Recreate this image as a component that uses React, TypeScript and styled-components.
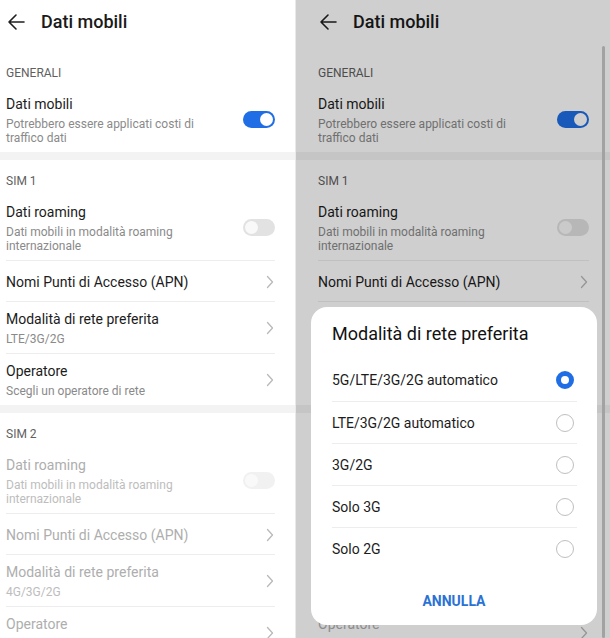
import React from "react";
import styled, { createGlobalStyle } from "styled-components";

type Item = {
  title: string;
  sub?: string;
  kind: "toggle" | "link";
  on?: boolean;
};

type Section = {
  label: string;
  disabled?: boolean;
  items: Item[];
};

const sections: Section[] = [
  {
    label: "GENERALI",
    items: [
      {
        title: "Dati mobili",
        sub: "Potrebbero essere applicati costi di traffico dati",
        kind: "toggle",
        on: true,
      },
    ],
  },
  {
    label: "SIM 1",
    items: [
      {
        title: "Dati roaming",
        sub: "Dati mobili in modalità roaming internazionale",
        kind: "toggle",
      },
      { title: "Nomi Punti di Accesso (APN)", kind: "link" },
      { title: "Modalità di rete preferita", sub: "LTE/3G/2G", kind: "link" },
      { title: "Operatore", sub: "Scegli un operatore di rete", kind: "link" },
    ],
  },
  {
    label: "SIM 2",
    disabled: true,
    items: [
      {
        title: "Dati roaming",
        sub: "Dati mobili in modalità roaming internazionale",
        kind: "toggle",
      },
      { title: "Nomi Punti di Accesso (APN)", kind: "link" },
      { title: "Modalità di rete preferita", sub: "4G/3G/2G", kind: "link" },
      { title: "Operatore", sub: "Scegli un operatore di rete", kind: "link" },
    ],
  },
];

const networkModes = [
  "5G/LTE/3G/2G automatico",
  "LTE/3G/2G automatico",
  "3G/2G",
  "Solo 3G",
  "Solo 2G",
];

const BackArrow = () => (
  <svg width="18" height="18" viewBox="0 0 18 18" fill="none">
    <path
      d="M17 9H2M9 2L2 9l7 7"
      stroke="#1f1f1f"
      strokeWidth="1.6"
      strokeLinecap="round"
      strokeLinejoin="round"
    />
  </svg>
);

const Chevron = () => (
  <svg width="8" height="14" viewBox="0 0 8 14" fill="none">
    <path
      d="M1.5 1.5L6.5 7l-5 5.5"
      stroke="#b9b9b9"
      strokeWidth="1.3"
      strokeLinecap="round"
      strokeLinejoin="round"
    />
  </svg>
);

const SettingsList = ({ padL, padR }: { padL: number; padR: number }) => (
  <List style={{ "--pl": `${padL}px`, "--pr": `${padR}px` } as React.CSSProperties}>
    <Header>
      <BackArrow />
      <HeaderTitle>Dati mobili</HeaderTitle>
    </Header>
    {sections.map((section, i) => (
      <React.Fragment key={section.label}>
        {i > 0 && <Band />}
        <SectionLabel>{section.label}</SectionLabel>
        <Rows>
          {section.items.map((item) => (
            <Row key={item.title} $single={!item.sub}>
              <RowText>
                <RowTitle $disabled={section.disabled}>{item.title}</RowTitle>
                {item.sub && <RowSub $disabled={section.disabled}>{item.sub}</RowSub>}
              </RowText>
              {item.kind === "toggle" ? (
                <Toggle $on={!!item.on} $disabled={section.disabled}>
                  <Knob $on={!!item.on} />
                </Toggle>
              ) : (
                <ChevronBox>
                  <Chevron />
                </ChevronBox>
              )}
            </Row>
          ))}
        </Rows>
      </React.Fragment>
    ))}
  </List>
);

const App = () => {
  return (
    <>
      <GlobalStyle />
      <Page>
        <Screen $width={296} $divider>
          <SettingsList padL={6} padR={20} />
        </Screen>
        <Screen $width={314}>
          <SettingsList padL={22} padR={21} />
          <Dim />
          <Scrollbar />
          <Dialog>
            <DialogTitle>Modalità di rete preferita</DialogTitle>
            <Options>
              {networkModes.map((mode, i) => (
                <Option key={mode}>
                  <OptionLabel>{mode}</OptionLabel>
                  <Radio $checked={i === 0} />
                </Option>
              ))}
            </Options>
            <DialogActions>
              <CancelButton>ANNULLA</CancelButton>
            </DialogActions>
          </Dialog>
        </Screen>
      </Page>
    </>
  );
};

const GlobalStyle = createGlobalStyle`
  html, body {
    margin: 0;
    padding: 0;
    background: #fff;
  }
  body {
    font-family: Roboto, "Noto Sans", "Liberation Sans", sans-serif;
    -webkit-font-smoothing: antialiased;
  }
`;

const Page = styled.div`
  display: flex;
  width: 610px;
  height: 638px;
  overflow: hidden;
  background: #fff;
`;

const Screen = styled.div<{ $width: number; $divider?: boolean }>`
  position: relative;
  flex: none;
  width: ${(p) => p.$width}px;
  height: 638px;
  overflow: hidden;
  background: #fff;
  box-sizing: border-box;
  border-right: ${(p) => (p.$divider ? "1px solid #e9e9e9" : "none")};
`;

const List = styled.div`
  display: flex;
  flex-direction: column;
`;

const Header = styled.div`
  display: flex;
  align-items: center;
  gap: 16px;
  height: 44px;
  margin-bottom: 8px;
  padding-left: calc(var(--pl) + 1px);
`;

const HeaderTitle = styled.h1`
  margin: 0;
  font-size: 18px;
  font-weight: 500;
  color: #1a1a1a;
  line-height: 22px;
`;

const Band = styled.div`
  height: 8px;
  background: #f3f3f3;
`;

const SectionLabel = styled.div`
  padding: 12px var(--pr) 5px var(--pl);
  font-size: 12px;
  line-height: 18px;
  color: #5f5f5f;
`;

const Rows = styled.div`
  display: flex;
  flex-direction: column;
  padding: 0 var(--pr) 0 var(--pl);
`;

const Row = styled.div<{ $single: boolean }>`
  display: flex;
  align-items: center;
  justify-content: space-between;
  padding: ${(p) => (p.$single ? "11px 0 9px" : "7px 0")};
  & + & {
    border-top: 1px solid #ededed;
  }
`;

const RowText = styled.div`
  display: flex;
  flex-direction: column;
  gap: 3px;
  max-width: 212px;
`;

const RowTitle = styled.div<{ $disabled?: boolean }>`
  font-size: 14px;
  line-height: 20px;
  color: ${(p) => (p.$disabled ? "#aeaeae" : "#1c1c1c")};
`;

const RowSub = styled.div<{ $disabled?: boolean }>`
  font-size: 12px;
  line-height: 14px;
  color: ${(p) => (p.$disabled ? "#bdbdbd" : "#8a8a8a")};
`;

const Toggle = styled.div<{ $on: boolean; $disabled?: boolean }>`
  display: flex;
  align-items: center;
  justify-content: ${(p) => (p.$on ? "flex-end" : "flex-start")};
  width: 32px;
  height: 17px;
  padding: 0 2px;
  box-sizing: border-box;
  border-radius: 9px;
  background: ${(p) => (p.$on ? "#1f6ee6" : p.$disabled ? "#f1f1f1" : "#e2e2e2")};
`;

const Knob = styled.div<{ $on: boolean }>`
  width: 13px;
  height: 13px;
  border-radius: 50%;
  background: ${(p) => (p.$on ? "#fff" : "#f9f9f9")};
`;

const ChevronBox = styled.div`
  display: flex;
  align-items: center;
  margin-right: 1px;
`;

const Dim = styled.div`
  position: absolute;
  inset: 0;
  background: rgba(0, 0, 0, 0.19);
`;

const Scrollbar = styled.div`
  position: absolute;
  right: 5px;
  top: 46px;
  bottom: 0;
  width: 3px;
  border-radius: 2px;
  background: #a2a2a2;
`;

const Dialog = styled.div`
  position: absolute;
  left: 15px;
  top: 307px;
  width: 286px;
  height: 318px;
  display: flex;
  flex-direction: column;
  border-radius: 16px;
  background: #fff;
  box-sizing: border-box;
`;

const DialogTitle = styled.h2`
  margin: 0;
  padding: 16px 21px 14px;
  font-size: 18px;
  font-weight: 400;
  line-height: 22px;
  color: #121212;
`;

const Options = styled.div`
  display: flex;
  flex-direction: column;
  padding: 0 20px 0 21px;
`;

const Option = styled.div`
  display: flex;
  align-items: center;
  justify-content: space-between;
  height: 42px;
  box-sizing: border-box;
  & + & {
    border-top: 1px solid #ededed;
  }
`;

const OptionLabel = styled.span`
  font-size: 14px;
  color: #1c1c1c;
`;

const Radio = styled.span<{ $checked: boolean }>`
  width: 18px;
  height: 18px;
  margin-right: 3px;
  box-sizing: border-box;
  border-radius: 50%;
  border: ${(p) => (p.$checked ? "5px solid #1f6ee6" : "1px solid #bfbfbf")};
  background: #fff;
`;

const DialogActions = styled.div`
  display: flex;
  justify-content: center;
  padding-top: 12px;
`;

const CancelButton = styled.button`
  height: 40px;
  padding: 0 16px;
  border: none;
  background: none;
  font-family: inherit;
  font-size: 14px;
  font-weight: 700;
  color: #2a72d4;
  cursor: pointer;
`;

export default App;
